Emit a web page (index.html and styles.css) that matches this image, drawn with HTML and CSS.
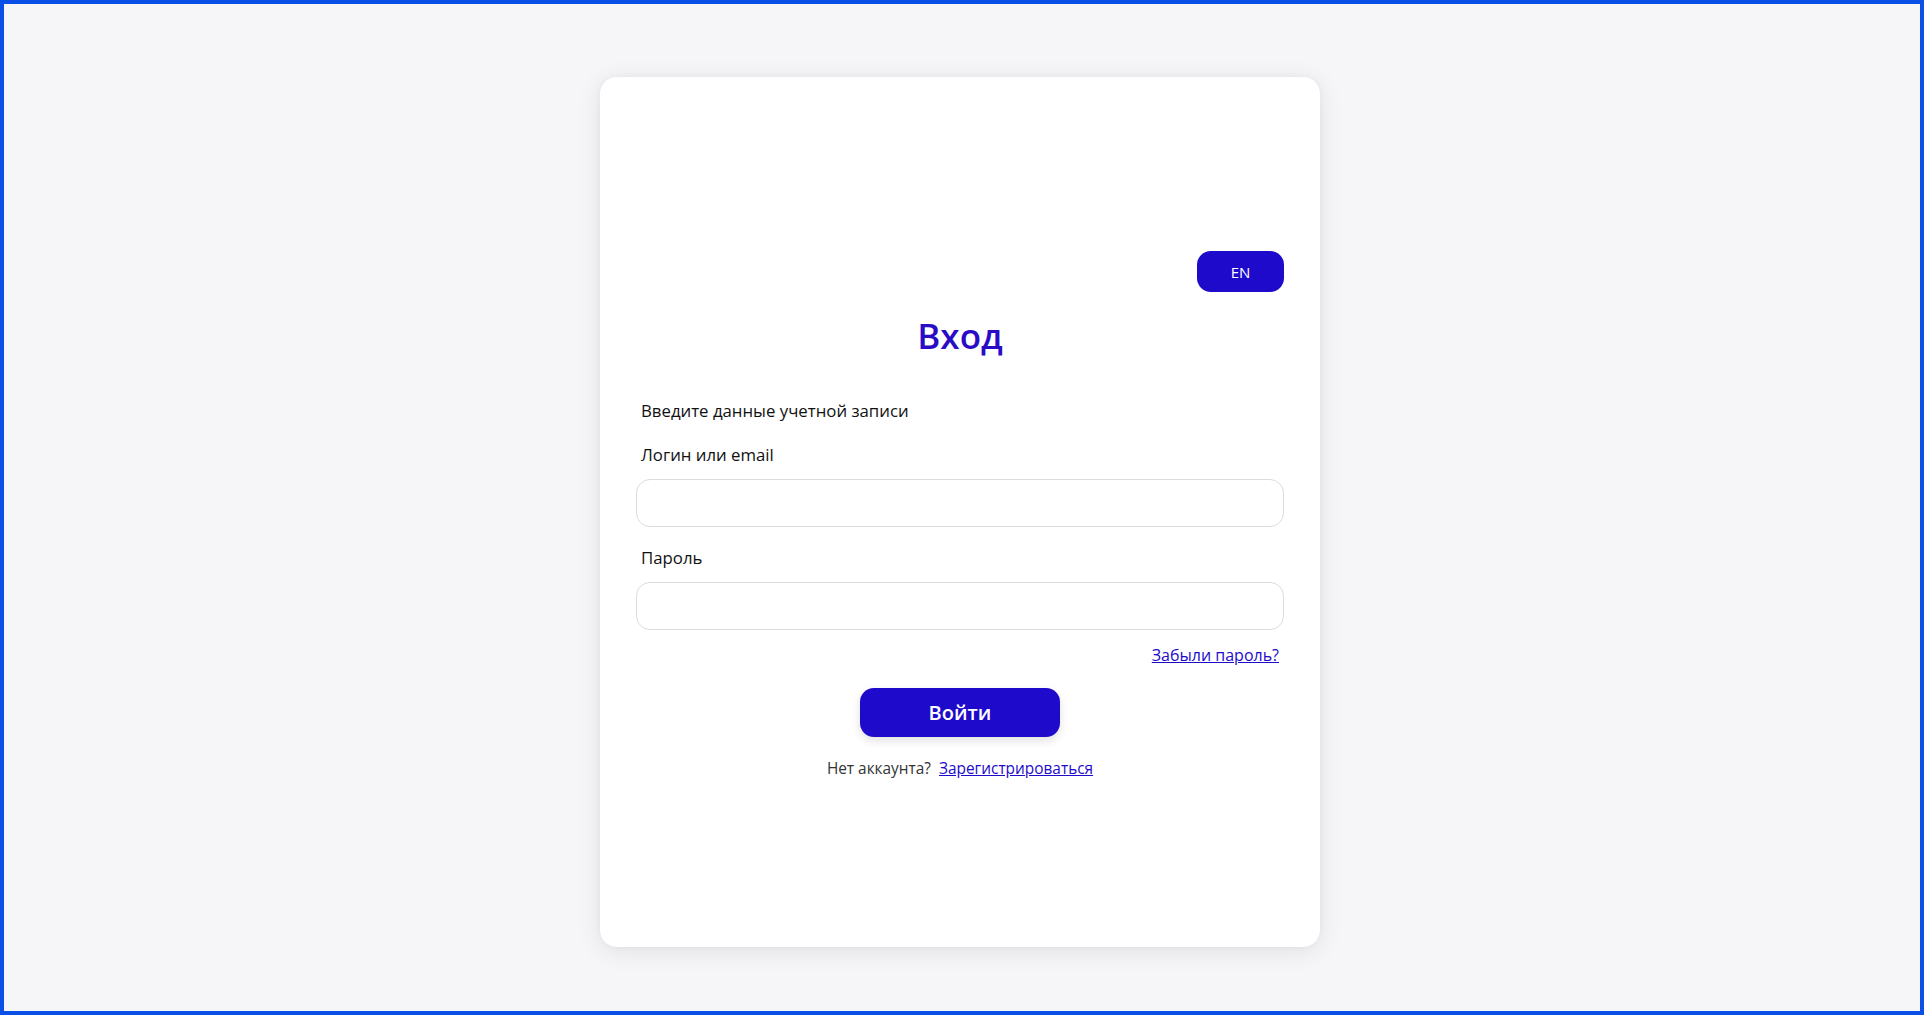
FILE: index.html
```html
<!DOCTYPE html>
<html lang="ru">
<head>
<meta charset="utf-8">
<title>Вход</title>
<link rel="stylesheet" href="styles.css">
</head>
<body>
<div class="frame"></div>
<main class="page">
  <section class="card">
    <div class="logo-slot"></div>
    <div class="lang-row">
      <button class="lang-btn" type="button">EN</button>
    </div>
    <h1 class="title">Вход</h1>
    <p class="subtitle">Введите данные учетной записи</p>
    <form class="form">
      <label class="label" for="login">Логин или email</label>
      <input class="input" id="login" type="text">
      <label class="label label-second" for="pass">Пароль</label>
      <input class="input" id="pass" type="password">
      <div class="forgot-row"><a class="link" href="#">Забыли пароль?</a></div>
      <div class="submit-row"><button class="submit" type="button">Войти</button></div>
      <p class="register">Нет аккаунта?&nbsp; <a class="link" href="#">Зарегистрироваться</a></p>
    </form>
  </section>
</main>
</body>
</html>
```

FILE: styles.css
```css
html, body {
  margin: 0;
  padding: 0;
}
body {
  background: #f6f6f8;
  font-family: "Open Sans", "Noto Sans", "Liberation Sans", sans-serif;
  color: #111;
  min-height: 1015px;
}
.frame {
  position: fixed;
  inset: 0;
  border: 4px solid #0a50e6;
  pointer-events: none;
  z-index: 10;
}
.page {
  display: flex;
  justify-content: center;
  padding-top: 77px;
  padding-right: 4px;
}
.card {
  width: 720px;
  height: 870px;
  box-sizing: border-box;
  background: #fff;
  border-radius: 17px;
  box-shadow: 0 4px 26px rgba(0, 0, 0, 0.09), 0 0 6px rgba(0, 0, 0, 0.04);
  padding: 24px 36px 0;
}
.logo-slot {
  height: 150px;
}
.lang-row {
  display: flex;
  justify-content: flex-end;
}
.lang-btn {
  width: 87px;
  height: 41px;
  border: none;
  border-radius: 14px;
  background: #1e0acb;
  color: #fff;
  font-family: inherit;
  font-size: 15px;
  cursor: pointer;
}
.title {
  margin: 23px 0 0;
  text-align: center;
  font-size: 35px;
  line-height: 42px;
  font-weight: 600;
  color: #2a0cc6;
}
.subtitle {
  margin: 42px 0 0 5px;
  font-size: 16.8px;
  line-height: 24px;
}
.form {
  display: flex;
  flex-direction: column;
}
.label {
  margin: 20px 0 0 5px;
  font-size: 16.8px;
  line-height: 24px;
}
.label-second {
  margin-top: 19px;
}
.input {
  margin-top: 12px;
  height: 48px;
  box-sizing: border-box;
  border: 1px solid #dcdcdc;
  border-radius: 14px;
  background: #fff;
  font-family: inherit;
  font-size: 16px;
  padding: 0 14px;
  outline: none;
}
.forgot-row {
  margin-top: 13px;
  display: flex;
  justify-content: flex-end;
  padding-right: 5px;
  font-size: 16px;
  line-height: 24px;
}
.link {
  color: #1e0acb;
  text-decoration: underline;
}
.submit-row {
  margin-top: 21px;
  display: flex;
  justify-content: center;
}
.submit {
  width: 200px;
  height: 49px;
  border: none;
  border-radius: 14px;
  background: #1e0acb;
  color: #fff;
  font-family: inherit;
  font-size: 20px;
  font-weight: 600;
  box-shadow: 0 4px 10px rgba(0, 0, 0, 0.12);
  cursor: pointer;
}
.register {
  margin: 20px 0 0;
  text-align: center;
  font-size: 15.4px;
  line-height: 24px;
  color: #333;
}
```
